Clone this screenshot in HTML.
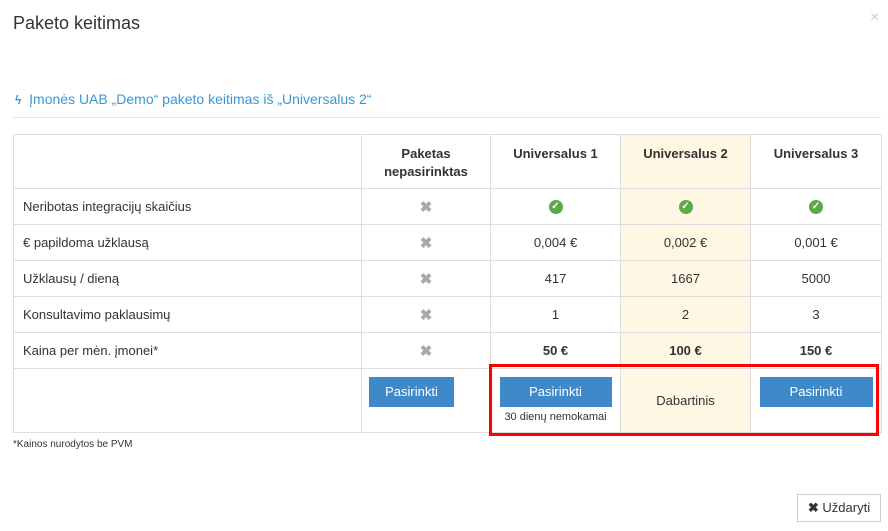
<!DOCTYPE html>
<html><head><meta charset="utf-8"><style>
body{margin:0;width:888px;height:531px;background:#fff;font-family:"Liberation Sans",sans-serif;color:#333;position:relative;overflow:hidden}
.t{position:absolute;left:13px;top:13px;font-size:18px;color:#333}
.x{position:absolute;left:870px;top:9px;font-size:16px;color:#ccc}
.sub{position:absolute;left:15px;top:91px;font-size:14px;color:#3a97d4}
.hr{position:absolute;left:13px;top:117px;width:868px;height:1px;background:#e3e6ea}
table{position:absolute;left:13px;top:134px;border-collapse:collapse;width:869px;table-layout:fixed;font-size:13px}
td,th{border:1px solid #ddd;text-align:center;padding:0}
td.l{text-align:left;padding-left:9px}
th{font-weight:bold;height:43px;vertical-align:top;padding-top:10px;line-height:18px;font-size:13px}
tr.r td{height:35px}
.h{background:#fdf7e3}
.no{color:#aaa;font-weight:bold;font-size:15px}
.ok{display:inline-block;width:14px;height:14px;border-radius:50%;background:#5ea946;color:#fff;font-size:10px;line-height:14px;font-weight:bold;vertical-align:middle}
.b{display:inline-block;background:#3f89c9;color:#fff;height:30px;line-height:30px;font-size:13px;text-align:center}
.f{position:absolute;left:13px;top:439px;font-size:10px;color:#333}
.red{position:absolute;left:489px;top:364px;width:384px;height:66px;border:3px solid #f00}
.cl{position:absolute;left:797px;top:494px;width:84px;height:28px;border:1px solid #ccc;box-sizing:border-box;font-size:13px;line-height:26px;text-align:center}
</style></head><body>
<div class="t">Paketo keitimas</div>
<div class="x">×</div>
<div class="sub"><b style="font-size:12px">ϟ</b>&nbsp; Įmonės UAB „Demo“ paketo keitimas iš „Universalus 2“</div>
<div class="hr"></div>
<table>
<colgroup><col style="width:348px"><col style="width:129px"><col style="width:130px"><col style="width:130px"><col style="width:131px"></colgroup>
<tr><th></th><th>Paketas<br>nepasirinktas</th><th>Universalus 1</th><th class="h">Universalus 2</th><th>Universalus 3</th></tr>
<tr class="r"><td class="l">Neribotas integracijų skaičius</td><td class="no">✖</td><td><span class="ok">✓</span></td><td class="h"><span class="ok">✓</span></td><td><span class="ok">✓</span></td></tr>
<tr class="r"><td class="l">€ papildoma užklausą</td><td class="no">✖</td><td>0,004 €</td><td class="h">0,002 €</td><td>0,001 €</td></tr>
<tr class="r"><td class="l">Užklausų / dieną</td><td class="no">✖</td><td>417</td><td class="h">1667</td><td>5000</td></tr>
<tr class="r"><td class="l">Konsultavimo paklausimų</td><td class="no">✖</td><td>1</td><td class="h">2</td><td>3</td></tr>
<tr class="r"><td class="l">Kaina per mėn. įmonei*</td><td class="no">✖</td><td><b>50 €</b></td><td class="h"><b>100 €</b></td><td><b>150 €</b></td></tr>
<tr><td style="height:63px"></td>
<td style="vertical-align:top;padding-top:8px;text-align:left;padding-left:7px"><span class="b" style="width:85px">Pasirinkti</span></td>
<td style="vertical-align:top;padding-top:8px"><span class="b" style="width:112px">Pasirinkti</span><div style="font-size:11px;margin-top:4px">30 dienų nemokamai</div></td>
<td class="h">Dabartinis</td>
<td style="vertical-align:top;padding-top:8px"><span class="b" style="width:113px">Pasirinkti</span></td></tr>
</table>
<div class="red"></div>
<div class="f">*Kainos nurodytos be PVM</div>
<div class="cl"><b>✖</b> Uždaryti</div>
</body></html>
